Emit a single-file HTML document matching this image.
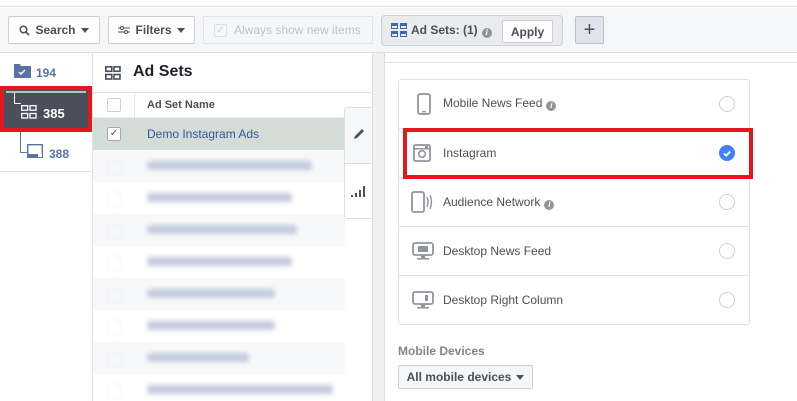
<!DOCTYPE html><html><head><style>
*{box-sizing:border-box;margin:0;padding:0}
body{width:797px;height:401px;overflow:hidden;background:#fff;font-family:"Liberation Sans",Arial,sans-serif;position:relative;font-size:12px;color:#4b4f56}
.a{position:absolute}
.btn{position:absolute;background:#fff;border:1px solid #ccd0d5;border-radius:2px;font-weight:bold;color:#4b4f56;font-size:12px;display:flex;align-items:center;justify-content:center}
.caret{display:inline-block;width:0;height:0;border-left:4px solid transparent;border-right:4px solid transparent;border-top:5px solid #4b4f56;margin-left:5px}
.row{position:absolute;left:399px;width:350px;height:49px;border-top:1px solid #e5e5e5;display:flex;align-items:center;font-size:12px;color:#4b4f56}
.row span.t{position:absolute;left:44px}
.radio{position:absolute;left:320px;width:16px;height:16px;border:1px solid #ccd0d5;border-radius:50%}
.ic{position:absolute;left:10px}
.info{display:inline-block;width:10px;height:10px;border-radius:50%;background:#90949c;color:#fff;font-size:8px;text-align:center;line-height:10px;font-style:italic;font-weight:bold;margin-left:4px;vertical-align:-1px}
.br{position:absolute;left:147px;height:9px;background:#c3cbe0;filter:blur(2.5px);border-radius:3px}
.cb{position:absolute;left:107px;width:14px;height:14px;border:1px solid #f0f0f0;border-radius:2px;filter:blur(1.5px)}
</style></head><body>
<div class="a" style="left:0;top:0;width:797px;height:7px;background:#fff;border-bottom:1px solid #dddfe2"></div>
<div class="a" style="left:0;top:8px;width:797px;height:45px;background:#f5f6f7;border-bottom:1px solid #dddfe2"></div>
<div class="btn" style="left:8px;top:16px;width:92px;height:28px"><svg width="11" height="11" viewBox="0 0 11 11" style="margin-right:5px"><circle cx="4.5" cy="4.5" r="3.3" fill="none" stroke="#4b4f56" stroke-width="1.5"/><path d="M7 7l3 3" stroke="#4b4f56" stroke-width="1.6"/></svg>Search<span class="caret"></span></div>
<div class="btn" style="left:108px;top:16px;width:87px;height:28px"><svg width="12" height="10" viewBox="0 0 12 10" style="margin-right:5px"><path d="M0 3h12M0 7h12" stroke="#4b4f56"/><circle cx="4" cy="3" r="1.5" fill="#fff" stroke="#4b4f56"/><circle cx="8" cy="7" r="1.5" fill="#fff" stroke="#4b4f56"/></svg>Filters<span class="caret"></span></div>
<div class="btn" style="left:203px;top:16px;width:170px;height:28px;background:#f5f6f7;border-color:#e0e2e6;color:#bec2c9;font-weight:normal;justify-content:flex-start;padding-left:10px"><span style="display:inline-block;width:13px;height:13px;border:1px solid #dddfe2;border-radius:2px;margin-right:7px;color:#ccd0d5;font-size:10px;line-height:11px;text-align:center">✓</span>Always show new items</div>
<div class="a" style="left:381px;top:15px;width:182px;height:31px;background:#e9ebee;border:1px solid #ccd0d5;border-radius:4px"></div>
<svg class="a" style="left:391px;top:23px" width="16" height="14"><g fill="#4267b2"><rect x="0" y="0" width="7" height="6"/><rect x="9" y="0" width="7" height="6"/><rect x="0" y="8" width="7" height="6"/><rect x="9" y="8" width="7" height="6"/></g><g fill="#e9ebee"><rect x="1" y="3" width="5" height="2"/><rect x="10" y="3" width="5" height="2"/><rect x="1" y="11" width="5" height="2"/><rect x="10" y="11" width="5" height="2"/></g></svg>
<div class="a" style="left:411px;top:23px;font-weight:bold;font-size:12px;color:#4b4f56">Ad Sets: (1)<span class="info">i</span></div>
<div class="btn" style="left:502px;top:20px;width:51px;height:23px">Apply</div>
<div class="btn" style="left:575px;top:16px;width:29px;height:28px;background:#dfe3ec;border-color:#b9c0cf;font-size:20px;font-weight:normal;color:#4b4f56">+</div>

<div class="a" style="left:0;top:53px;width:93px;height:119px;border-right:1px solid #dddfe2;border-bottom:1px solid #dddfe2"></div>
<div class="a" style="left:92px;top:172px;width:1px;height:229px;background:#dddfe2"></div>
<svg class="a" style="left:14px;top:64px" width="17" height="14"><path d="M0 0h6l1 2h10v12H0z" fill="#5b72a6"/><path d="M5 8l2 2 4-4" stroke="#fff" stroke-width="1.5" fill="none"/></svg>
<div class="a" style="left:36px;top:66px;font-weight:bold;color:#5b72a6;font-size:12px">194</div>
<div class="a" style="left:0;top:86px;width:92px;height:46px;border:4px solid #e4171e;background:#4b4f5c"></div>
<div class="a" style="left:6px;top:91px;width:80px;height:2px;background:#bbbec5"></div>
<div class="a" style="left:14px;top:93px;width:7px;height:11px;border-left:1px solid #fff;border-bottom:1px solid #fff"></div>
<svg class="a" style="left:21px;top:105px" width="16" height="14"><g fill="none" stroke="#fff" stroke-width="1.3"><rect x=".7" y=".7" width="6" height="4.5"/><rect x="9" y=".7" width="6" height="4.5"/><rect x=".7" y="8.5" width="6" height="4.5"/><rect x="9" y="8.5" width="6" height="4.5"/></g></svg>
<div class="a" style="left:43px;top:106px;font-weight:bold;color:#fff;font-size:13px">385</div>
<div class="a" style="left:20px;top:132px;width:7px;height:21px;border-left:1px solid #5b72a6;border-bottom:1px solid #5b72a6"></div>
<svg class="a" style="left:27px;top:144px" width="16" height="14"><rect x=".7" y=".7" width="14.6" height="12.6" fill="none" stroke="#5b72a6" stroke-width="1.4"/><rect x="0" y="10" width="16" height="4" fill="#5b72a6"/><rect x="11" y="10" width="4" height="3" fill="#fff"/></svg>
<div class="a" style="left:49px;top:147px;font-weight:bold;color:#5b72a6;font-size:12px">388</div>

<div class="a" style="left:93px;top:92px;width:279px;height:1px;background:#dddfe2"></div>
<svg class="a" style="left:105px;top:66px" width="16" height="14"><g fill="none" stroke="#4b4f56" stroke-width="1.6"><rect x=".8" y=".8" width="6" height="4.5"/><rect x="9" y=".8" width="6" height="4.5"/><rect x=".8" y="8.5" width="6" height="4.5"/><rect x="9" y="8.5" width="6" height="4.5"/></g></svg>
<div class="a" style="left:133px;top:63px;font-weight:bold;font-size:16px;color:#1d2129">Ad Sets</div>
<div class="a" style="left:93px;top:117px;width:279px;height:1px;background:#e9ebee"></div>
<div class="a" style="left:134px;top:93px;width:1px;height:64px;background:#e5e5e5"></div>
<div class="a" style="left:107px;top:98px;width:14px;height:14px;border:1px solid #ccd0d5;border-radius:2px;background:#fff"></div>
<div class="a" style="left:147px;top:99px;font-weight:bold;color:#4b4f56;font-size:11px">Ad Set Name</div>
<div class="a" style="left:93px;top:118px;width:252px;height:32px;background:#d3dcd7"></div>
<div class="a" style="left:107px;top:127px;width:14px;height:14px;border:1px solid #aaa;border-radius:2px;background:#fff;font-size:10px;line-height:12px;text-align:center;color:#4b4f56">✓</div>
<div class="a" style="left:147px;top:127px;color:#365899;font-size:12px">Demo Instagram Ads</div>
<div class="a" style="left:93px;top:150px;width:252px;height:32px;background:#f7f8fa"></div>
<div class="a" style="left:93px;top:214px;width:252px;height:32px;background:#f7f8fa"></div>
<div class="a" style="left:93px;top:278px;width:252px;height:32px;background:#f7f8fa"></div>
<div class="a" style="left:93px;top:342px;width:252px;height:32px;background:#f7f8fa"></div>
<div class="br" style="top:161px;width:165px"></div><div class="cb" style="top:160px"></div>
<div class="br" style="top:193px;width:145px"></div><div class="cb" style="top:192px"></div>
<div class="br" style="top:225px;width:150px"></div><div class="cb" style="top:224px"></div>
<div class="br" style="top:257px;width:145px"></div><div class="cb" style="top:256px"></div>
<div class="br" style="top:289px;width:128px"></div><div class="cb" style="top:288px"></div>
<div class="br" style="top:321px;width:128px"></div><div class="cb" style="top:320px"></div>
<div class="br" style="top:353px;width:102px"></div><div class="cb" style="top:352px"></div>
<div class="br" style="top:385px;width:186px"></div><div class="cb" style="top:384px"></div>
<div class="a" style="left:344px;top:107px;width:29px;height:112px;background:#f6f7f9;border:1px solid #dddfe2;border-right:none;border-radius:3px 0 0 3px"></div>
<div class="a" style="left:345px;top:163px;width:28px;height:55px;background:#fff;border-top:1px solid #dddfe2"></div>
<svg class="a" style="left:352px;top:127px" width="14" height="14"><path d="M2 12l1-3 7-7 2 2-7 7z" fill="#4b4f56"/></svg>
<svg class="a" style="left:351px;top:184px" width="15" height="14"><g fill="#4b4f56"><rect x="0" y="11" width="2" height="2"/><rect x="4" y="9" width="2" height="4"/><rect x="8" y="6" width="2" height="7"/><rect x="12" y="2" width="2" height="11"/></g></svg>
<div class="a" style="left:372px;top:53px;width:13px;height:348px;background:#f0f0f0;border-left:1px solid #e0e0e0;border-right:1px solid #e0e0e0"></div>

<div class="a" style="left:385px;top:62px;width:412px;height:1px;background:#e5e5e5"></div>
<div class="a" style="left:398px;top:79px;width:352px;height:246px;border:1px solid #dddfe2;border-radius:3px"></div>
<div class="row" style="top:79px;border-top:none"><svg class="ic" width="14" height="22" style="left:18px"><rect x="1" y="1" width="12" height="20" rx="2" fill="none" stroke="#90949c" stroke-width="1.8"/><rect x="5" y="18" width="4" height="1.5" fill="#90949c"/></svg><span class="t">Mobile News Feed<span class="info">i</span></span><div class="radio"></div></div>
<div class="row" style="top:128px"><svg class="ic" width="18" height="18" style="left:14px"><rect x="1" y="1" width="16" height="16" rx="1.5" fill="none" stroke="#90949c" stroke-width="1.8"/><rect x="1" y="4" width="16" height="1.5" fill="#90949c"/><circle cx="9" cy="10" r="3.3" fill="none" stroke="#90949c" stroke-width="1.6"/><rect x="12" y="2" width="3" height="2" fill="#90949c"/></svg><span class="t">Instagram</span><div class="radio" style="background:#4080ff;border-color:#4080ff"><svg width="14" height="14" style="position:absolute;left:0;top:0"><path d="M4 7.5l2.2 2.2 4-4.2" stroke="#fff" stroke-width="1.8" fill="none"/></svg></div></div>
<div class="row" style="top:177px"><svg class="ic" width="22" height="22" style="left:12px"><rect x="1" y="1" width="12" height="20" rx="2" fill="none" stroke="#90949c" stroke-width="1.8"/><path d="M16 6q2 5 0 10M19 4q3 7 0 14" stroke="#90949c" stroke-width="1.4" fill="none"/></svg><span class="t">Audience Network<span class="info">i</span></span><div class="radio"></div></div>
<div class="row" style="top:226px"><svg class="ic" width="22" height="18" style="left:13px"><rect x="1" y="1" width="20" height="12" rx="2" fill="none" stroke="#90949c" stroke-width="1.8"/><rect x="6" y="4" width="10" height="6" fill="#90949c"/><rect x="9" y="13" width="4" height="3" fill="#90949c"/><rect x="5" y="16" width="12" height="1.5" fill="#90949c"/></svg><span class="t">Desktop News Feed</span><div class="radio"></div></div>
<div class="row" style="top:275px"><svg class="ic" width="22" height="18" style="left:13px"><rect x="1" y="1" width="20" height="12" rx="2" fill="none" stroke="#90949c" stroke-width="1.8"/><rect x="13" y="4" width="3" height="6" fill="#90949c"/><rect x="9" y="13" width="4" height="3" fill="#90949c"/><rect x="5" y="16" width="12" height="1.5" fill="#90949c"/></svg><span class="t">Desktop Right Column</span><div class="radio"></div></div>
<div class="a" style="left:403px;top:128px;width:350px;height:51px;border:4px solid #e4171e"></div>
<div class="a" style="left:398px;top:344px;color:#606770;font-size:12px;font-weight:bold;opacity:.8">Mobile Devices</div>
<div class="btn" style="left:398px;top:365px;width:135px;height:24px;background:#f6f7f9">All mobile devices<span class="caret"></span></div>
</body></html>
